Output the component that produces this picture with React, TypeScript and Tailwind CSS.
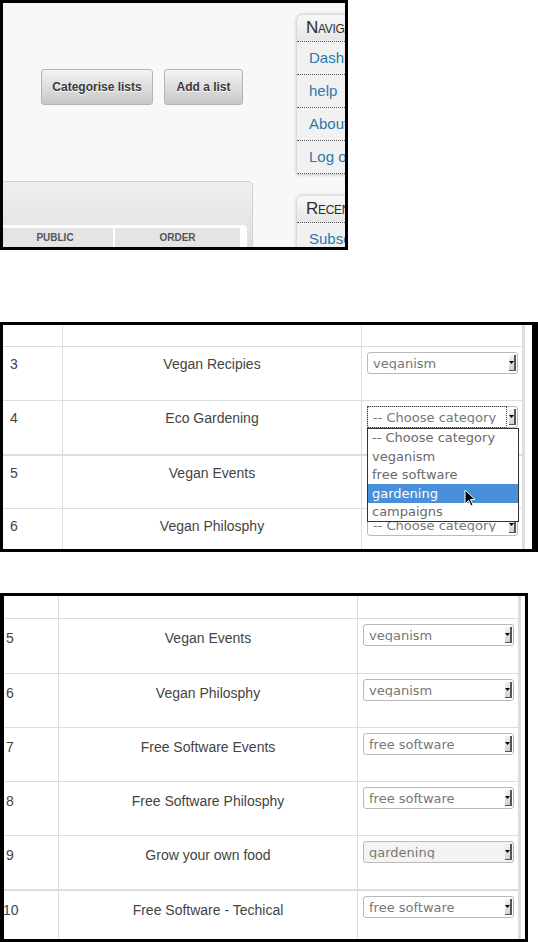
import React from "react";

type ListRow = {
  id: string;
  name: string;
  category: string;
  focused?: boolean;
  muted?: boolean;
  seam?: boolean;
  tall?: boolean;
  idShift?: boolean;
};

const middleRows: ListRow[] = [
  { id: "3", name: "Vegan Recipies", category: "veganism" },
  { id: "4", name: "Eco Gardening", category: "-- Choose category", focused: true },
  { id: "5", name: "Vegan Events", category: "-- Choose category", seam: true },
  { id: "6", name: "Vegan Philosphy", category: "-- Choose category" },
];

const bottomRows: ListRow[] = [
  { id: "5", name: "Vegan Events", category: "veganism", tall: true },
  { id: "6", name: "Vegan Philosphy", category: "veganism" },
  { id: "7", name: "Free Software Events", category: "free software" },
  { id: "8", name: "Free Software Philosphy", category: "free software" },
  { id: "9", name: "Grow your own food", category: "gardening", muted: true },
  { id: "10", name: "Free Software - Techical", category: "free software", seam: true, idShift: true },
];

const options = ["-- Choose category", "veganism", "free software", "gardening", "campaigns"];

const Arrow = () => (
  <span className="mr-[1px] w-[7px] h-[16px] shrink-0 bg-linear-to-b from-[#f2f2f2] to-[#d2d2d2] border-r-2 border-b border-[#555] flex items-center justify-center">
    <svg width="5" height="3" viewBox="0 0 5 3">
      <path d="M0 0 L5 0 L2.5 3 Z" fill="#000" />
    </svg>
  </span>
);

const FakeSelect = ({ value, focused, muted }: { value: string; focused?: boolean; muted?: boolean }) => (
  <div
    className={`relative w-[151px] h-[22px] border border-[#b9b9b9] rounded-[3px] flex items-center ${
      muted ? "bg-[#f3f3f3]" : "bg-white"
    }`}
  >
    {focused && (
      <span className="absolute left-[-1px] top-[-1px] bottom-[-1px] right-[10px] border border-dotted border-[#444]" />
    )}
    <span className="flex-1 pl-[5px] font-['DejaVu_Sans',sans-serif] text-[13px] leading-none text-[#777] whitespace-nowrap overflow-hidden">
      {value}
    </span>
    <Arrow />
  </div>
);

const ListTable = ({
  rows,
  headerH,
  textPt,
}: {
  rows: ListRow[];
  headerH: string;
  textPt: string;
}) => (
  <div className="w-[522px] shrink-0 border-r-[3px] border-[#dedede] text-[14px] text-[#444]">
    <div className={`grid grid-cols-[60px_299px_160px] ${headerH}`}>
      <div className="border-r border-[#dddddd]" />
      <div className="border-r border-[#dddddd]" />
      <div />
    </div>
    {rows.map((r) => (
      <div
        key={r.id + r.name}
        className={`grid grid-cols-[60px_299px_160px] ${r.seam ? "border-t-2" : "border-t"} border-[#dddddd] ${
          r.tall ? "h-[55px]" : "h-[54px]"
        }`}
      >
        <div className={`border-r border-[#dddddd] pl-[7px] ${textPt} leading-[20px]`}>
          <span className={r.idShift ? "-ml-[3px]" : ""}>{r.id}</span>
        </div>
        <div className={`border-r border-[#dddddd] text-center ${textPt} leading-[20px]`}>{r.name}</div>
        <div className="pl-[5px] pt-[5px]">
          <FakeSelect value={r.category} focused={r.focused} muted={r.muted} />
        </div>
      </div>
    ))}
  </div>
);

const SideBox = ({ title, links }: { title: string; links: string[] }) => (
  <div className="w-[200px] rounded-tl-[6px] bg-[#f1f1f1] shadow-[0_0_4px_rgba(0,0,0,0.3)]">
    <div className="h-[27px] pl-[9px] rounded-tl-[6px] bg-linear-to-b from-[#f8f8f8] to-[#e6e6e6] border-b border-dotted border-[#555] flex items-center text-[17px] tracking-[-0.3px] text-[#2e2e2e] [font-variant-caps:small-caps] whitespace-nowrap">
      {title}
    </div>
    {links.map((l) => (
      <div
        key={l}
        className="h-[33px] pl-[12px] border-b border-dotted border-[#555] flex items-center text-[15px] text-[#2a79ae] whitespace-nowrap"
      >
        {l}
      </div>
    ))}
  </div>
);

const Cursor = () => (
  <svg width="12" height="19" viewBox="0 0 12 19" className="absolute left-[461px] top-[164px]">
    <path d="M1 1 L1 15 L4.5 11.5 L7 17 L9 16 L6.5 10.5 L11 10.5 Z" fill="#000" stroke="#fff" strokeWidth="1" />
  </svg>
);

export default function App() {
  return (
    <div className="w-[538px] h-[942px] bg-white overflow-hidden font-['Liberation_Sans',Arial,sans-serif]">
      {/* first crop: buttons and sidebar */}
      <div className="w-[348px] h-[250px] border-[3px] border-black bg-[#f8f8f8] overflow-hidden flex">
        <div className="w-[294px] shrink-0 pt-[66px]">
          <div className="flex gap-[11px] pl-[38px]">
            <button className="w-[112px] h-[36px] rounded-[3px] border border-[#b4b4b4] bg-linear-to-b from-[#f3f3f3] to-[#c8c8c8] text-[12px] font-bold text-[#3a3a3a] [text-shadow:0_1px_0_#fff]">
              Categorise lists
            </button>
            <button className="w-[79px] h-[36px] rounded-[3px] border border-[#b4b4b4] bg-linear-to-b from-[#f3f3f3] to-[#c8c8c8] text-[12px] font-bold text-[#3a3a3a] [text-shadow:0_1px_0_#fff]">
              Add a list
            </button>
          </div>
          <div className="mt-[76px] -ml-[10px] w-[260px] h-[80px] border border-[#d2d2d2] rounded-tr-[5px] bg-linear-to-b from-[#f0f0f0] to-[#dcdcdc] pt-[43px] pr-[5px]">
            <div className="bg-white rounded-tr-[4px] pt-[3px] pl-[3px] pr-[7px] h-full">
              <div className="flex h-[20px] text-[10px] font-bold text-[#555] leading-[20px]">
                <div className="w-[116px] bg-[#e4e4e4] text-center">PUBLIC</div>
                <div className="w-[2px] bg-white" />
                <div className="w-[125px] bg-[#e4e4e4] text-center">ORDER</div>
              </div>
            </div>
          </div>
        </div>
        <div className="shrink-0 pt-[12px] flex flex-col gap-[22px]">
          <SideBox title="Navigation" links={["Dashboard", "help", "About", "Log out"]} />
          <SideBox title="Recent" links={["Subscriptions"]} />
        </div>
      </div>

      {/* second crop: open category dropdown */}
      <div className="relative mt-[72px] w-[538px] h-[230px] border-[3px] border-r-[6px] border-black bg-white overflow-hidden">
        <ListTable rows={middleRows} headerH="h-[21px]" textPt="pt-[7px]" />
        <div className="absolute left-[364px] top-[103px] w-[152px] border border-[#333] bg-white font-['DejaVu_Sans',sans-serif] text-[13px] text-[#6a6a6a]">
          {options.map((o) => (
            <div
              key={o}
              className={`h-[18.4px] pl-[4px] flex items-center whitespace-nowrap ${
                o === "gardening" ? "bg-[#4a8fd9] text-white" : ""
              }`}
            >
              {o}
            </div>
          ))}
        </div>
        <Cursor />
      </div>

      {/* third crop: categories assigned */}
      <div className="mt-[41px] w-[528px] h-[349px] border-[3px] border-l-4 border-black bg-white overflow-hidden">
        <div className="-ml-[5px]">
          <ListTable rows={bottomRows} headerH="h-[22px]" textPt="pt-[9px]" />
        </div>
      </div>
    </div>
  );
}
